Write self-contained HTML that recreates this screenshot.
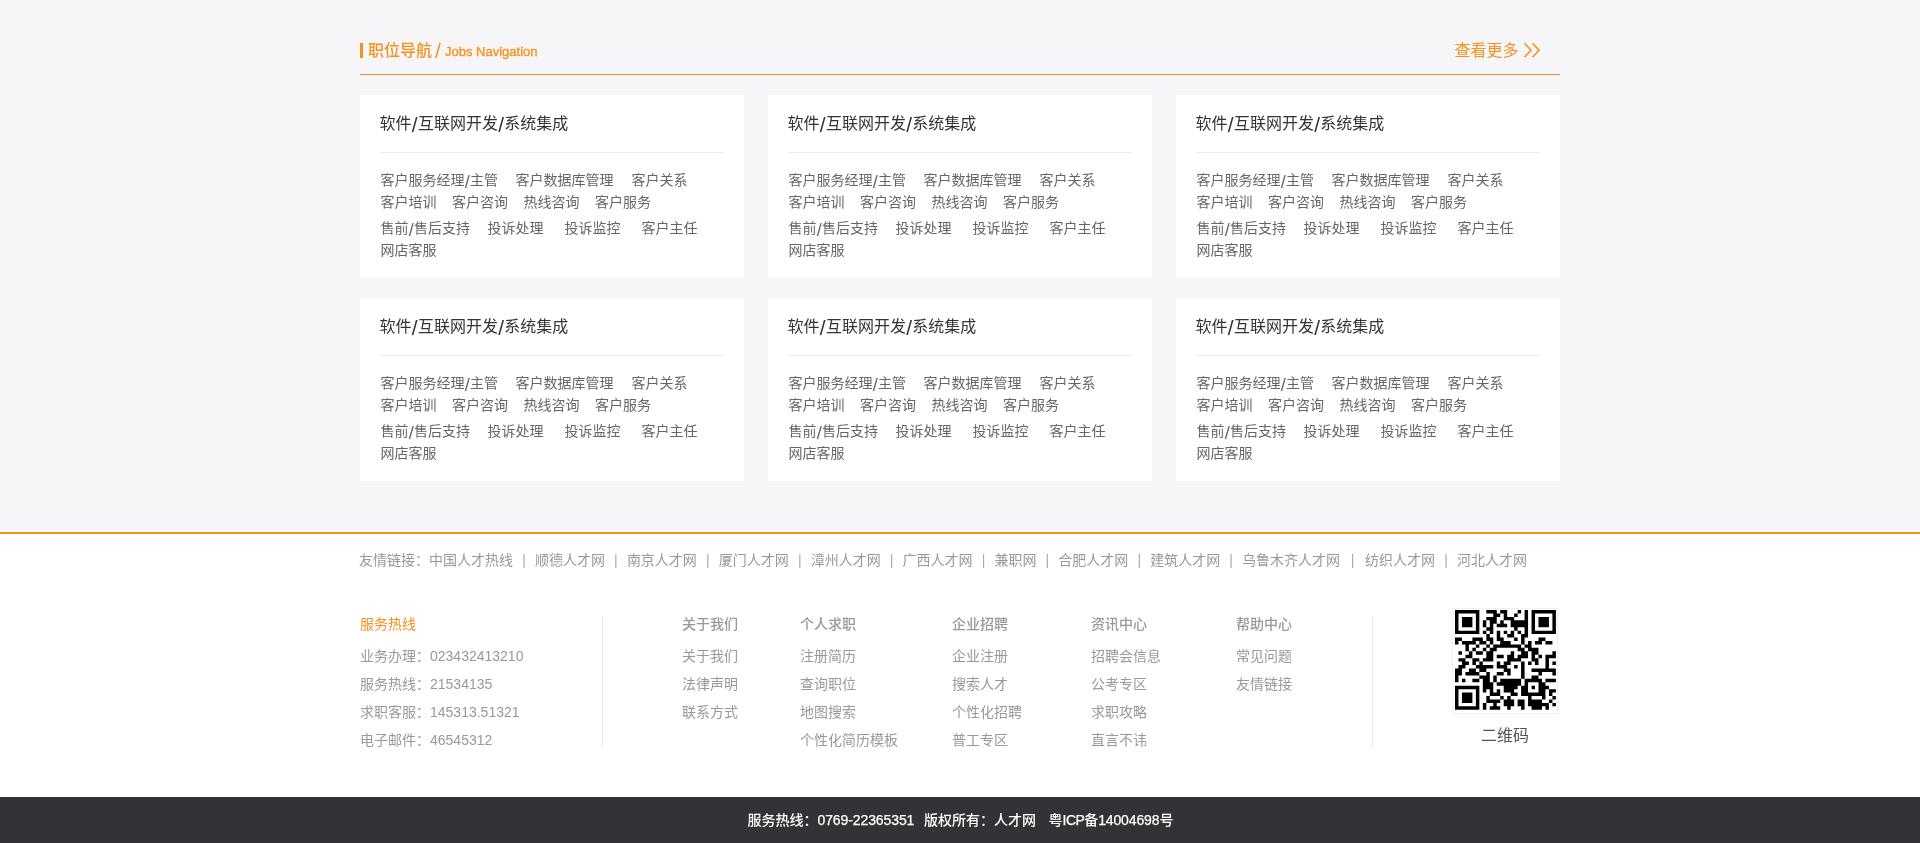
<!DOCTYPE html>
<html lang="zh-CN">
<head>
<meta charset="utf-8">
<title>职位导航</title>
<style>
*{margin:0;padding:0;box-sizing:border-box}
html,body{width:1920px;height:843px;overflow:hidden}
#wrap{position:absolute;left:0;top:0;width:1920px;height:843px;overflow:hidden;will-change:transform}
body{background:#f6f6f8;font-family:"Liberation Sans","Noto Sans CJK SC",sans-serif;position:relative;color:#666;font-size:14px}
.t{position:absolute;white-space:nowrap;line-height:20px}
.hd-bar{position:absolute;left:360px;top:43px;width:3px;height:15px;background:#f6911e}
.hd-line{position:absolute;left:360px;top:74px;width:1200px;height:1px;background:#f6911e}
.hd-title{left:368px;top:41px;font-size:16px;font-weight:500;color:#f6911e}
.hd-sl{left:435px;top:41px;font-size:21px;color:#f6911e}
.hd-en{left:445px;top:42px;font-size:13px;color:#f6911e;-webkit-text-stroke:.35px #f6911e}
.s{font-size:1.3em;line-height:0;vertical-align:-.15em;margin:0 .015em}
.more{left:1454.5px;top:41px;font-size:16px;color:#f6911e}
.card{position:absolute;width:384px;height:183px;background:#fff}
.card h3{position:absolute;left:19.5px;top:18px;font-size:16px;font-weight:400;color:#333;line-height:22px;white-space:nowrap}
.card .ln{position:absolute;left:20px;top:57px;width:344px;height:1px;background:#ececec}
.card .t{color:#666;font-size:14px}
.foot{position:absolute;left:0;top:532px;width:1920px;height:265px;background:#fff;border-top:2px solid #f6911e}
.links{left:359.1px;top:550px;color:#999;font-size:14px}
.links i{font-style:normal;display:inline-block;width:21.9px;text-align:center;line-height:0;position:relative;top:.4px;color:#aaa}
.fc{color:#999;font-size:14px}
.fh{color:#999;font-size:14px;font-weight:500}
.vl{position:absolute;width:1px;background:#e8e8e8;top:617px;height:130px}
.bar{position:absolute;left:0;top:797px;width:1920px;height:46px;background:#313337}
.bar .t{color:#fff;font-size:14px;font-weight:500;top:13px}
.bar .n{-webkit-text-stroke:.25px #fff}
</style>
</head>
<body>
<div id="wrap">
<div class="hd-bar"></div>
<div class="t hd-title">职位导航</div><div class="t hd-sl">/</div><div class="t hd-en">Jobs Navigation</div>
<div class="t more">查看更多</div>
<svg style="position:absolute;left:1523px;top:42px" width="18" height="17" viewBox="0 0 18 17"><path d="M1.5 1.2 L8 8.2 L1.5 15.2 M9.5 1.2 L16 8.2 L9.5 15.2" fill="none" stroke="#f6911e" stroke-width="1.6"/></svg>
<div class="hd-line"></div>
<div class="card" style="left:360px;top:95px"><h3>软件<span class="s">/</span>互联网开发<span class="s">/</span>系统集成</h3><div class="ln"></div><span class="t" style="left:20.5px;top:75px">客户服务经理<span class="s">/</span>主管</span><span class="t" style="left:155.5px;top:75px">客户数据库管理</span><span class="t" style="left:271.5px;top:75px">客户关系</span><span class="t" style="left:20.5px;top:97px">客户培训</span><span class="t" style="left:92px;top:97px">客户咨询</span><span class="t" style="left:163.5px;top:97px">热线咨询</span><span class="t" style="left:235px;top:97px">客户服务</span><span class="t" style="left:20.5px;top:123px">售前<span class="s">/</span>售后支持</span><span class="t" style="left:127.5px;top:123px">投诉处理</span><span class="t" style="left:204.5px;top:123px">投诉监控</span><span class="t" style="left:281.5px;top:123px">客户主任</span><span class="t" style="left:20.5px;top:145px">网店客服</span></div>
<div class="card" style="left:768px;top:95px"><h3>软件<span class="s">/</span>互联网开发<span class="s">/</span>系统集成</h3><div class="ln"></div><span class="t" style="left:20.5px;top:75px">客户服务经理<span class="s">/</span>主管</span><span class="t" style="left:155.5px;top:75px">客户数据库管理</span><span class="t" style="left:271.5px;top:75px">客户关系</span><span class="t" style="left:20.5px;top:97px">客户培训</span><span class="t" style="left:92px;top:97px">客户咨询</span><span class="t" style="left:163.5px;top:97px">热线咨询</span><span class="t" style="left:235px;top:97px">客户服务</span><span class="t" style="left:20.5px;top:123px">售前<span class="s">/</span>售后支持</span><span class="t" style="left:127.5px;top:123px">投诉处理</span><span class="t" style="left:204.5px;top:123px">投诉监控</span><span class="t" style="left:281.5px;top:123px">客户主任</span><span class="t" style="left:20.5px;top:145px">网店客服</span></div>
<div class="card" style="left:1176px;top:95px"><h3>软件<span class="s">/</span>互联网开发<span class="s">/</span>系统集成</h3><div class="ln"></div><span class="t" style="left:20.5px;top:75px">客户服务经理<span class="s">/</span>主管</span><span class="t" style="left:155.5px;top:75px">客户数据库管理</span><span class="t" style="left:271.5px;top:75px">客户关系</span><span class="t" style="left:20.5px;top:97px">客户培训</span><span class="t" style="left:92px;top:97px">客户咨询</span><span class="t" style="left:163.5px;top:97px">热线咨询</span><span class="t" style="left:235px;top:97px">客户服务</span><span class="t" style="left:20.5px;top:123px">售前<span class="s">/</span>售后支持</span><span class="t" style="left:127.5px;top:123px">投诉处理</span><span class="t" style="left:204.5px;top:123px">投诉监控</span><span class="t" style="left:281.5px;top:123px">客户主任</span><span class="t" style="left:20.5px;top:145px">网店客服</span></div>
<div class="card" style="left:360px;top:298px"><h3>软件<span class="s">/</span>互联网开发<span class="s">/</span>系统集成</h3><div class="ln"></div><span class="t" style="left:20.5px;top:75px">客户服务经理<span class="s">/</span>主管</span><span class="t" style="left:155.5px;top:75px">客户数据库管理</span><span class="t" style="left:271.5px;top:75px">客户关系</span><span class="t" style="left:20.5px;top:97px">客户培训</span><span class="t" style="left:92px;top:97px">客户咨询</span><span class="t" style="left:163.5px;top:97px">热线咨询</span><span class="t" style="left:235px;top:97px">客户服务</span><span class="t" style="left:20.5px;top:123px">售前<span class="s">/</span>售后支持</span><span class="t" style="left:127.5px;top:123px">投诉处理</span><span class="t" style="left:204.5px;top:123px">投诉监控</span><span class="t" style="left:281.5px;top:123px">客户主任</span><span class="t" style="left:20.5px;top:145px">网店客服</span></div>
<div class="card" style="left:768px;top:298px"><h3>软件<span class="s">/</span>互联网开发<span class="s">/</span>系统集成</h3><div class="ln"></div><span class="t" style="left:20.5px;top:75px">客户服务经理<span class="s">/</span>主管</span><span class="t" style="left:155.5px;top:75px">客户数据库管理</span><span class="t" style="left:271.5px;top:75px">客户关系</span><span class="t" style="left:20.5px;top:97px">客户培训</span><span class="t" style="left:92px;top:97px">客户咨询</span><span class="t" style="left:163.5px;top:97px">热线咨询</span><span class="t" style="left:235px;top:97px">客户服务</span><span class="t" style="left:20.5px;top:123px">售前<span class="s">/</span>售后支持</span><span class="t" style="left:127.5px;top:123px">投诉处理</span><span class="t" style="left:204.5px;top:123px">投诉监控</span><span class="t" style="left:281.5px;top:123px">客户主任</span><span class="t" style="left:20.5px;top:145px">网店客服</span></div>
<div class="card" style="left:1176px;top:298px"><h3>软件<span class="s">/</span>互联网开发<span class="s">/</span>系统集成</h3><div class="ln"></div><span class="t" style="left:20.5px;top:75px">客户服务经理<span class="s">/</span>主管</span><span class="t" style="left:155.5px;top:75px">客户数据库管理</span><span class="t" style="left:271.5px;top:75px">客户关系</span><span class="t" style="left:20.5px;top:97px">客户培训</span><span class="t" style="left:92px;top:97px">客户咨询</span><span class="t" style="left:163.5px;top:97px">热线咨询</span><span class="t" style="left:235px;top:97px">客户服务</span><span class="t" style="left:20.5px;top:123px">售前<span class="s">/</span>售后支持</span><span class="t" style="left:127.5px;top:123px">投诉处理</span><span class="t" style="left:204.5px;top:123px">投诉监控</span><span class="t" style="left:281.5px;top:123px">客户主任</span><span class="t" style="left:20.5px;top:145px">网店客服</span></div>
<div class="foot"></div>
<div class="t links">友情链接：中国人才热线<i>|</i>顺德人才网<i>|</i>南京人才网<i>|</i>厦门人才网<i>|</i>漳州人才网<i>|</i>广西人才网<i>|</i>兼职网<i>|</i>合肥人才网<i>|</i>建筑人才网<i>|</i>乌鲁木齐人才网<i style="width:24.9px">|</i>纺织人才网<i>|</i>河北人才网</div>
<span class="t fh" style="left:360px;top:614px;color:#f6911e;font-weight:400">服务热线</span>
<span class="t fc" style="left:360px;top:646px">业务办理：023432413210</span>
<span class="t fc" style="left:360px;top:674px">服务热线：21534135</span>
<span class="t fc" style="left:360px;top:702px">求职客服：145313.51321</span>
<span class="t fc" style="left:360px;top:730px">电子邮件：46545312</span>
<span class="t fh" style="left:682px;top:614px">关于我们</span>
<span class="t fc" style="left:682px;top:646px">关于我们</span>
<span class="t fc" style="left:682px;top:674px">法律声明</span>
<span class="t fc" style="left:682px;top:702px">联系方式</span>
<span class="t fh" style="left:800px;top:614px">个人求职</span>
<span class="t fc" style="left:800px;top:646px">注册简历</span>
<span class="t fc" style="left:800px;top:674px">查询职位</span>
<span class="t fc" style="left:800px;top:702px">地图搜索</span>
<span class="t fc" style="left:800px;top:730px">个性化简历模板</span>
<span class="t fh" style="left:952px;top:614px">企业招聘</span>
<span class="t fc" style="left:952px;top:646px">企业注册</span>
<span class="t fc" style="left:952px;top:674px">搜索人才</span>
<span class="t fc" style="left:952px;top:702px">个性化招聘</span>
<span class="t fc" style="left:952px;top:730px">普工专区</span>
<span class="t fh" style="left:1091px;top:614px">资讯中心</span>
<span class="t fc" style="left:1091px;top:646px">招聘会信息</span>
<span class="t fc" style="left:1091px;top:674px">公考专区</span>
<span class="t fc" style="left:1091px;top:702px">求职攻略</span>
<span class="t fc" style="left:1091px;top:730px">直言不讳</span>
<span class="t fh" style="left:1236px;top:614px">帮助中心</span>
<span class="t fc" style="left:1236px;top:646px">常见问题</span>
<span class="t fc" style="left:1236px;top:674px">友情链接</span>
<div class="vl" style="left:602px"></div><div class="vl" style="left:1372px"></div>
<div style="position:absolute;left:1452px;top:608px;width:106px;height:106px;border:1px solid #f0f0f0;background:#fff"></div>
<svg style="position:absolute;left:1455.2px;top:610.1px" width="100.9" height="99.8" viewBox="0 0 29 29" preserveAspectRatio="none"><path d="M0 0h7v1h-7zM9 0h3v1h-3zM13 0h2v1h-2zM18 0h1v1h-1zM20 0h1v1h-1zM22 0h7v1h-7zM0 1h1v1h-1zM6 1h1v1h-1zM11 1h2v1h-2zM14 1h1v1h-1zM17 1h1v1h-1zM20 1h1v1h-1zM22 1h1v1h-1zM28 1h1v1h-1zM0 2h1v1h-1zM2 2h3v1h-3zM6 2h1v1h-1zM9 2h3v1h-3zM14 2h3v1h-3zM20 2h1v1h-1zM22 2h1v1h-1zM24 2h3v1h-3zM28 2h1v1h-1zM0 3h1v1h-1zM2 3h3v1h-3zM6 3h1v1h-1zM8 3h1v1h-1zM10 3h2v1h-2zM13 3h1v1h-1zM16 3h5v1h-5zM22 3h1v1h-1zM24 3h3v1h-3zM28 3h1v1h-1zM0 4h1v1h-1zM2 4h3v1h-3zM6 4h1v1h-1zM8 4h1v1h-1zM10 4h1v1h-1zM12 4h3v1h-3zM16 4h5v1h-5zM22 4h1v1h-1zM24 4h3v1h-3zM28 4h1v1h-1zM0 5h1v1h-1zM6 5h1v1h-1zM9 5h2v1h-2zM17 5h1v1h-1zM20 5h1v1h-1zM22 5h1v1h-1zM28 5h1v1h-1zM0 6h7v1h-7zM8 6h1v1h-1zM10 6h1v1h-1zM12 6h1v1h-1zM14 6h1v1h-1zM16 6h1v1h-1zM18 6h1v1h-1zM20 6h1v1h-1zM22 6h7v1h-7zM9 7h1v1h-1zM12 7h1v1h-1zM15 7h2v1h-2zM19 7h2v1h-2zM0 8h2v1h-2zM5 8h3v1h-3zM9 8h2v1h-2zM12 8h2v1h-2zM17 8h1v1h-1zM19 8h1v1h-1zM24 8h2v1h-2zM0 9h1v1h-1zM2 9h4v1h-4zM7 9h2v1h-2zM10 9h1v1h-1zM13 9h3v1h-3zM19 9h1v1h-1zM21 9h1v1h-1zM23 9h2v1h-2zM26 9h2v1h-2zM3 10h1v1h-1zM6 10h1v1h-1zM9 10h1v1h-1zM11 10h8v1h-8zM20 10h2v1h-2zM3 11h1v1h-1zM5 11h1v1h-1zM8 11h1v1h-1zM10 11h2v1h-2zM18 11h2v1h-2zM21 11h3v1h-3zM1 12h1v1h-1zM4 12h1v1h-1zM6 12h2v1h-2zM9 12h2v1h-2zM16 12h1v1h-1zM19 12h2v1h-2zM22 12h2v1h-2zM28 12h1v1h-1zM3 13h2v1h-2zM9 13h2v1h-2zM12 13h2v1h-2zM15 13h2v1h-2zM18 13h3v1h-3zM22 13h1v1h-1zM24 13h1v1h-1zM26 13h3v1h-3zM1 14h2v1h-2zM5 14h2v1h-2zM8 14h3v1h-3zM15 14h4v1h-4zM22 14h2v1h-2zM26 14h1v1h-1zM2 15h2v1h-2zM5 15h1v1h-1zM7 15h1v1h-1zM12 15h1v1h-1zM14 15h2v1h-2zM19 15h1v1h-1zM21 15h1v1h-1zM23 15h1v1h-1zM26 15h1v1h-1zM28 15h1v1h-1zM1 16h2v1h-2zM6 16h5v1h-5zM12 16h3v1h-3zM17 16h1v1h-1zM19 16h1v1h-1zM26 16h1v1h-1zM0 17h2v1h-2zM4 17h2v1h-2zM7 17h2v1h-2zM14 17h2v1h-2zM19 17h1v1h-1zM22 17h7v1h-7zM0 18h2v1h-2zM3 18h4v1h-4zM9 18h1v1h-1zM12 18h2v1h-2zM15 18h1v1h-1zM19 18h1v1h-1zM24 18h1v1h-1zM28 18h1v1h-1zM0 19h1v1h-1zM7 19h3v1h-3zM11 19h1v1h-1zM19 19h1v1h-1zM22 19h2v1h-2zM0 20h1v1h-1zM2 20h1v1h-1zM5 20h2v1h-2zM8 20h2v1h-2zM11 20h1v1h-1zM13 20h6v1h-6zM20 20h5v1h-5zM26 20h3v1h-3zM8 21h3v1h-3zM12 21h7v1h-7zM20 21h1v1h-1zM24 21h2v1h-2zM0 22h7v1h-7zM8 22h3v1h-3zM14 22h4v1h-4zM19 22h2v1h-2zM22 22h1v1h-1zM24 22h3v1h-3zM0 23h1v1h-1zM6 23h1v1h-1zM8 23h1v1h-1zM10 23h1v1h-1zM12 23h1v1h-1zM14 23h3v1h-3zM19 23h2v1h-2zM24 23h2v1h-2zM27 23h2v1h-2zM0 24h1v1h-1zM2 24h3v1h-3zM6 24h1v1h-1zM10 24h3v1h-3zM16 24h2v1h-2zM19 24h7v1h-7zM27 24h1v1h-1zM0 25h1v1h-1zM2 25h3v1h-3zM6 25h1v1h-1zM9 25h1v1h-1zM13 25h1v1h-1zM15 25h1v1h-1zM21 25h1v1h-1zM25 25h1v1h-1zM28 25h1v1h-1zM0 26h1v1h-1zM2 26h3v1h-3zM6 26h1v1h-1zM9 26h4v1h-4zM14 26h3v1h-3zM18 26h2v1h-2zM21 26h4v1h-4zM27 26h1v1h-1zM0 27h1v1h-1zM6 27h1v1h-1zM8 27h1v1h-1zM11 27h1v1h-1zM14 27h3v1h-3zM18 27h2v1h-2zM21 27h6v1h-6zM28 27h1v1h-1zM0 28h7v1h-7zM8 28h1v1h-1zM10 28h3v1h-3zM15 28h1v1h-1zM19 28h1v1h-1zM22 28h3v1h-3zM26 28h1v1h-1z" fill="#000"/></svg>
<span class="t" style="left:1481px;top:725px;font-size:16px;color:#555;line-height:22px">二维码</span>
<div class="bar"><span class="t" style="left:747.5px">服务热线：<span class="n" style="letter-spacing:-.1px">0769-22365351</span></span><span class="t" style="left:924px">版权所有：人才网</span><span class="t" style="left:1048.6px">粤<span class="n" style="letter-spacing:-.6px">ICP</span>备<span class="n" style="letter-spacing:-.13px">14004698</span>号</span></div>
</div>
</body>
</html>
